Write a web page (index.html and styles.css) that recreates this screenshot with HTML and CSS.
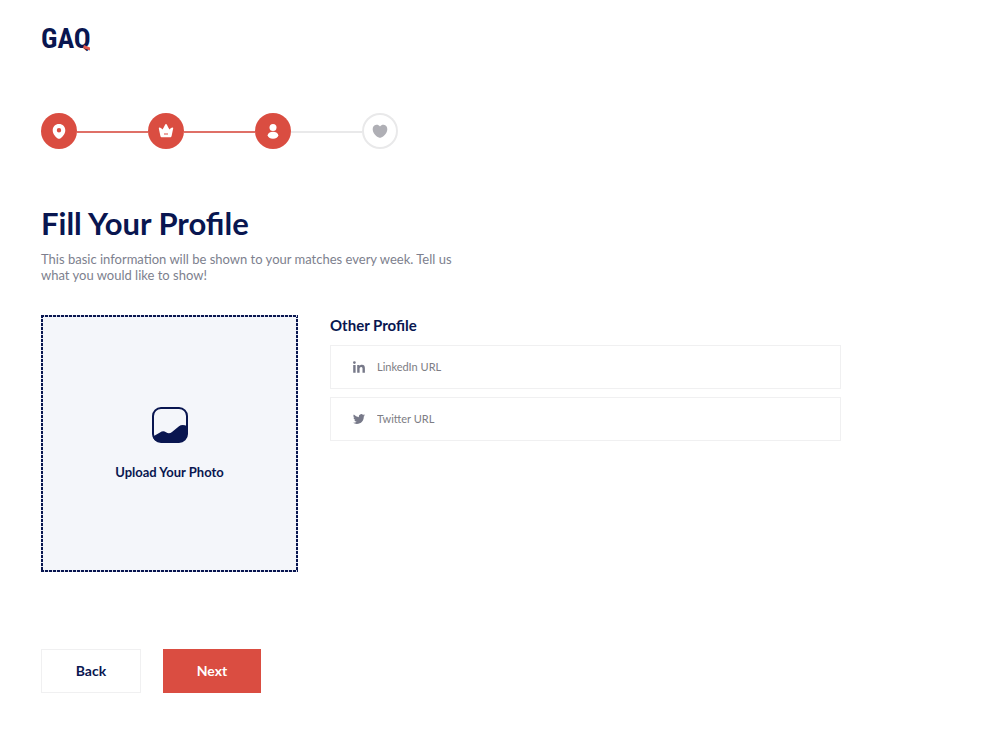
FILE: index.html
```html
<!DOCTYPE html>
<html lang="en">
<head>
<meta charset="utf-8">
<meta name="viewport" content="width=device-width, initial-scale=1">
<title>Fill Your Profile</title>
<link rel="stylesheet" href="styles.css">
</head>
<body>
<div class="page">
  <header class="header">
    <div class="logo">GAQ<svg class="logo-tail" viewBox="0 0 8 6" aria-hidden="true"><path d="M1 0 7 2.500V5.500L0 3Z"/></svg></div>
  </header>

  <ol class="steps">
    <li class="step step-done"><svg viewBox="0 0 36 36" aria-hidden="true"><path fill-rule="evenodd" d="M18 11c3.700 0 6.300 2.600 6.300 6.300 0 3.500-2.600 6.500-5 8.100-.8.500-1.800.5-2.600 0-2.400-1.600-5-4.600-5-8.100 0-3.700 2.600-6.300 6.300-6.300Zm0 4a2.200 2.200 0 1 0 0 4.400 2.200 2.200 0 0 0 0-4.400Z"/></svg></li>
    <li class="step step-done"><svg viewBox="0 0 36 36" aria-hidden="true"><path fill-rule="evenodd" d="M11.500 14.400c1.300.2 2.200.9 3 2 .9-1.200 1.800-2.800 2.700-4.800.3-.7 1.300-.7 1.600 0 .9 2 1.800 3.600 2.700 4.800.8-1.100 1.700-1.800 3-2 .5 0 .8.300.7.800l-1.600 7.700c-.2.800-.7 1.300-1.500 1.300h-8.200c-.8 0-1.300-.5-1.500-1.300l-1.600-7.700c-.1-.5.200-.8.700-.8ZM16 20.500v1h4v-1Z"/></svg></li>
    <li class="step step-done"><svg viewBox="0 0 36 36" aria-hidden="true"><circle cx="18" cy="14.500" r="3.500"/><ellipse cx="18" cy="22.200" rx="5.300" ry="3.500"/></svg></li>
    <li class="step"><svg viewBox="0 0 36 36" aria-hidden="true"><path d="M18 13.400c1-1.400 2.400-1.900 3.700-1.700 2.300.3 3.800 2.300 3.600 4.800-.2 3.500-2.900 6.700-6.200 8.100-.7.300-1.500.3-2.200 0-3.300-1.400-6-4.600-6.200-8.100-.2-2.500 1.300-4.500 3.600-4.800 1.300-.2 2.700.3 3.700 1.700Z"/></svg></li>
  </ol>

  <form class="form">
    <h1 class="title">Fill Your Profile</h1>
    <p class="intro">This basic information will be shown to your matches every week. Tell us what you would like to show!</p>

    <div class="content">
      <button class="upload" type="button">
        <svg class="upload-icon" viewBox="0 0 36 36" aria-hidden="true"><rect class="frame" x="1" y="1" width="34" height="34" rx="8"/><path d="M1 29.500 8 25.500c2-1.400 4-1.600 6-.3 2 1.600 4 1.500 6-.2l7-5.800c2-1.600 5-1.700 8-.2V27a8 8 0 0 1-8 8H9c-4 0-8-2-8-5.500Z"/></svg>
        <span>Upload Your Photo</span>
      </button>

      <section class="links">
        <h2 class="subtitle">Other Profile</h2>
        <label class="field">
          <svg class="field-icon" viewBox="0 0 12 12" aria-hidden="true"><path d="M.2 4h2.400v7.800H.2ZM1.400.2a1.400 1.400 0 1 1 0 2.800 1.400 1.400 0 0 1 0-2.800ZM4.200 4h2.300v1.100C7 4.300 7.800 3.800 8.900 3.800c2.500 0 3 1.600 3 3.700v4.300H9.500V8c0-1 0-2.100-1.300-2.100S6.600 6.900 6.600 8v3.800H4.200Z"/></svg>
          <input class="input" type="url" placeholder="LinkedIn URL" aria-label="LinkedIn URL">
        </label>
        <label class="field">
          <svg class="field-icon" viewBox="0 0 24 24" aria-hidden="true"><path d="M23.950 4.570a10 10 0 0 1-2.820.77 4.960 4.960 0 0 0 2.160-2.720 9.900 9.900 0 0 1-3.120 1.190 4.920 4.920 0 0 0-8.380 4.480A13.930 13.930 0 0 1 1.640 3.160a4.920 4.920 0 0 0 1.520 6.570 4.900 4.900 0 0 1-2.230-.61v.06a4.920 4.920 0 0 0 3.950 4.830 5 5 0 0 1-2.210.08 4.940 4.940 0 0 0 4.600 3.420A9.870 9.870 0 0 1 0 19.540a13.990 13.990 0 0 0 7.550 2.210c9.050 0 14-7.500 14-13.980 0-.21 0-.42-.02-.63a9.940 9.940 0 0 0 2.420-2.570Z"/></svg>
          <input class="input" type="url" placeholder="Twitter URL" aria-label="Twitter URL">
        </label>
      </section>
    </div>

    <div class="actions">
      <button class="button" type="button">Back</button>
      <button class="button button-primary" type="submit">Next</button>
    </div>
  </form>
</div>
</body>
</html>
```
FILE: styles.css
```css
* { box-sizing: border-box; }

body {
  margin: 0;
  background: #fff;
  color: #091650;
  font-family: Lato, "Open Sans", sans-serif;
}

.page {
  max-width: 882px;
  padding: 24px 41px;
}

.logo {
  display: inline-block;
  position: relative;
  font: bold 28px/30px "Roboto Condensed", "Open Sans Condensed", Roboto, sans-serif;
}

.logo-tail {
  position: absolute;
  right: 0;
  bottom: 3px;
  width: 8px;
  height: 6px;
  fill: #e4584b;
}

.header { height: 30px; }

.steps {
  display: flex;
  gap: 71px;
  margin: 59px 0 0;
  padding: 0;
  list-style: none;
}

.step {
  position: relative;
  width: 36px;
  height: 36px;
  border-radius: 50%;
  box-shadow: inset 0 0 0 2px #e9e9ea;
  fill: #afafb5;
}

.step svg { display: block; }

.step-done {
  background: #da4d41;
  box-shadow: none;
  fill: #fff;
}

.step + .step::before {
  content: "";
  position: absolute;
  right: 100%;
  top: 18px;
  width: 71px;
  height: 2px;
  background: #e9e9ea;
}

.step + .step-done::before { background: #df7067; }

.title {
  margin: 54px 0 0;
  font-size: 31px;
  font-weight: 700;
  line-height: 40px;
}

.intro {
  max-width: 430px;
  margin: 8px 0 0;
  color: #7d7f8e;
  font-size: 13px;
  line-height: 16px;
}

.content {
  display: grid;
  grid-template-columns: 257px minmax(0, 1fr);
  gap: 32px;
  margin-top: 32px;
}

.upload {
  --dash: #091650 0 3px, #dfe3f0 3px 4px;
  display: flex;
  flex-direction: column;
  align-items: center;
  justify-content: center;
  gap: 20px;
  aspect-ratio: 1;
  padding: 0;
  border: 0;
  background:
    repeating-linear-gradient(90deg, var(--dash)) top / 100% 2px no-repeat,
    repeating-linear-gradient(90deg, var(--dash)) bottom / 100% 2px no-repeat,
    repeating-linear-gradient(var(--dash)) left / 2px 100% no-repeat,
    repeating-linear-gradient(var(--dash)) right / 2px 100% no-repeat,
    #f4f6fa;
  color: inherit;
  font: 700 13px/18px Lato, "Open Sans", sans-serif;
}

.upload-icon {
  width: 36px;
  height: 36px;
  fill: #091650;
}

.frame {
  fill: none;
  stroke: #091650;
  stroke-width: 2;
}

.links {
  display: flex;
  flex-direction: column;
  gap: 8px;
}

.subtitle {
  margin: 0 0 2px;
  font-size: 15px;
  font-weight: 700;
  line-height: 20px;
}

.field {
  display: flex;
  align-items: center;
  gap: 12px;
  height: 44px;
  padding: 0 22px;
  border: 1px solid #f0f0f1;
}

.field-icon {
  flex: none;
  width: 12px;
  height: 12px;
  fill: #777989;
}

.input {
  flex: 1;
  min-width: 0;
  padding: 0;
  border: 0;
  outline: 0;
  background: none;
  color: #091650;
  font: 11px/18px Lato, "Open Sans", sans-serif;
}

.input::placeholder { color: #7d7d84; opacity: 1; }

.actions {
  display: flex;
  gap: 22px;
  margin-top: 77px;
}

.button {
  min-width: 100px;
  height: 44px;
  padding: 0 32px;
  border: 1px solid #f0f0f1;
  background: #fff;
  color: #091650;
  font: 700 14px/20px Lato, "Open Sans", sans-serif;
}

.button-primary {
  min-width: 98px;
  border-color: #da4d41;
  background: #da4d41;
  color: #fff;
}
```
